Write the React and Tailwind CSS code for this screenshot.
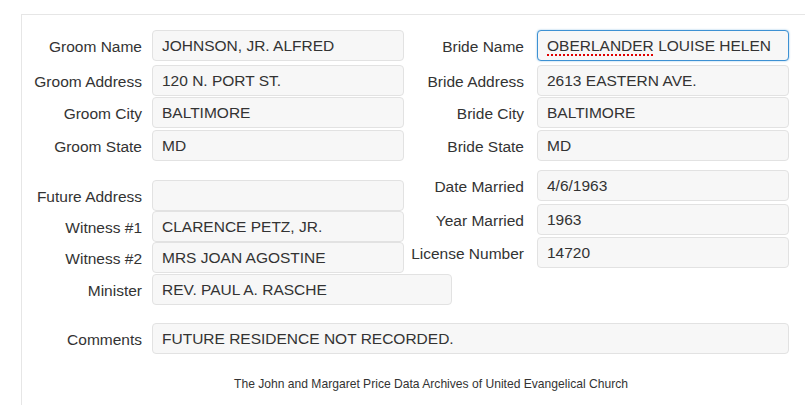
import React from 'react';

// one label + read-only box, laid out like a bootstrap horizontal form row
function Field({ label, value, labelW = 'w-[120px]', gap = 'gap-[10px]', boxW = 'w-[252px]', focused = false, spell = false, className = '' }) {
  return (
    <div className={`flex items-center ${gap} ${className}`}>
      <div className={`${labelW} shrink-0 text-right pt-[2px]`}>{label}</div>
      <div
        className={`${boxW} shrink-0 h-[31px] flex items-center px-[9px] pt-[1px] rounded-[4px] border bg-[#f7f7f7] whitespace-nowrap overflow-hidden ${
          focused ? 'border-[#3d91d3] shadow-[0_0_2px_rgba(61,145,211,0.6)]' : 'border-[#e2e2e2]'
        }`}
      >
        {spell ? (
          <>
            <span className="underline decoration-dotted decoration-[#e00000] decoration-2 underline-offset-[3px]">OBERLANDER</span>
            <span>&nbsp;{value}</span>
          </>
        ) : (
          value
        )}
      </div>
    </div>
  );
}

export default function App() {
  return (
    <div
      className="w-[805px] h-[405px] overflow-hidden bg-white pt-[14px] pl-[21px] text-[#333] text-[15.5px]"
      style={{ fontFamily: '"Liberation Sans", Arial, sans-serif' }}
    >
      <div className="h-[420px] w-[900px] border-t border-l border-[#e6e6e6] pt-[15px]">
        {/* groom / bride pairs */}
        <div className="flex">
          <div className="w-[382px] shrink-0">
            <Field label="Groom Name" value="JOHNSON, JR. ALFRED" />
            <Field label="Groom Address" value="120 N. PORT ST." className="mt-[4px]" />
            <Field label="Groom City" value="BALTIMORE" className="mt-[1px]" />
            <Field label="Groom State" value="MD" className="mt-[2px]" />
          </div>
          <div>
            <Field label="Bride Name" value="LOUISE HELEN" gap="gap-[13px]" focused spell />
            <Field label="Bride Address" value="2613 EASTERN AVE." gap="gap-[13px]" className="mt-[4px]" />
            <Field label="Bride City" value="BALTIMORE" gap="gap-[13px]" className="mt-[1px]" />
            <Field label="Bride State" value="MD" gap="gap-[13px]" className="mt-[2px]" />
          </div>
        </div>

        {/* witnesses / marriage details */}
        <div className="flex items-start">
          <div className="w-[382px] shrink-0 mt-[19px]">
            <Field label="Future Address" value="" />
            <Field label="Witness #1" value="CLARENCE PETZ, JR." />
            <Field label="Witness #2" value="MRS JOAN AGOSTINE" />
            <Field label="Minister" value="REV. PAUL A. RASCHE" boxW="w-[300px]" className="mt-[1px]" />
          </div>
          <div className="mt-[9px]">
            <Field label="Date Married" value="4/6/1963" gap="gap-[13px]" />
            <Field label="Year Married" value="1963" gap="gap-[13px]" className="mt-[3px]" />
            <Field label="License Number" value="14720" gap="gap-[13px]" className="mt-[2px]" />
          </div>
        </div>

        <Field label="Comments" value="FUTURE RESIDENCE NOT RECORDED." boxW="w-[637px]" className="mt-[18px]" />

        <div className="w-[818px] text-center text-[12.1px] mt-[21px]">
          The John and Margaret Price Data Archives of United Evangelical Church
        </div>
      </div>
    </div>
  );
}
